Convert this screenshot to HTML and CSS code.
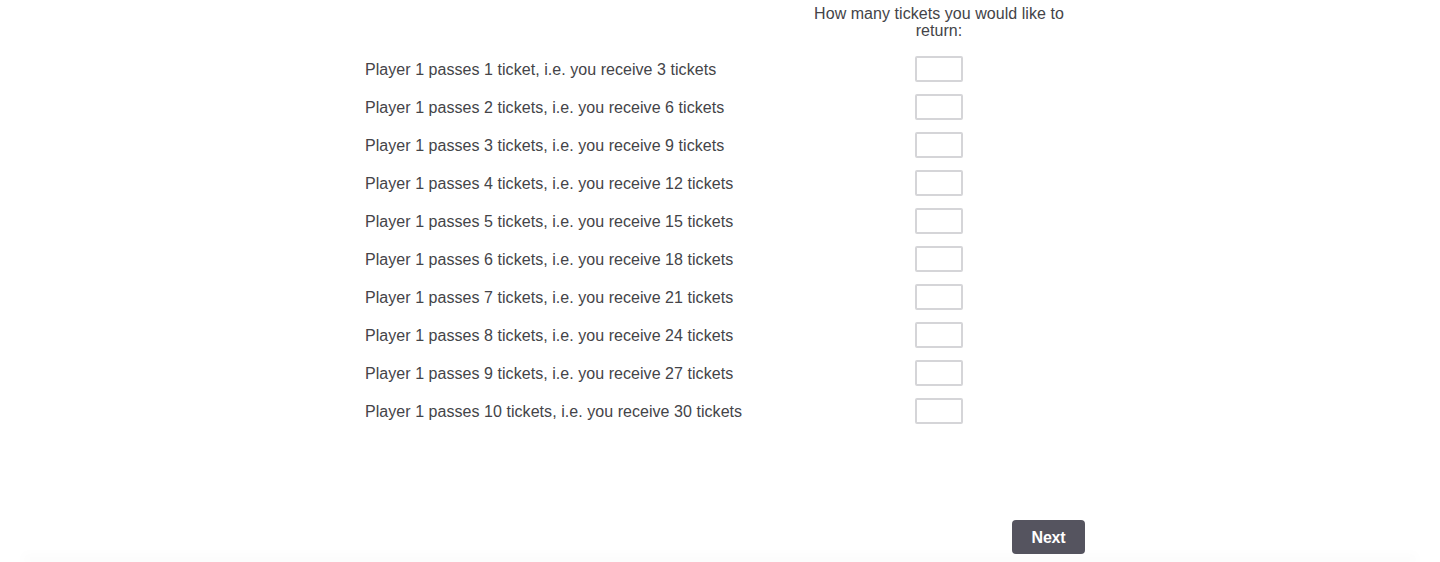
FILE: index.html
```html
<!DOCTYPE html>
<html>
<head>
<meta charset="utf-8">
<link rel="stylesheet" href="styles.css">
</head>
<body>
<div class="page">
  <div class="survey">
    <div class="head-row">
      <div class="label-col"></div>
      <div class="input-col head">How many tickets you would like to return:</div>
    </div>
    <div class="row"><div class="label-col">Player 1 passes 1 ticket, i.e. you receive 3 tickets</div><div class="input-col"><input class="field" type="text"></div></div>
    <div class="row"><div class="label-col">Player 1 passes 2 tickets, i.e. you receive 6 tickets</div><div class="input-col"><input class="field" type="text"></div></div>
    <div class="row"><div class="label-col">Player 1 passes 3 tickets, i.e. you receive 9 tickets</div><div class="input-col"><input class="field" type="text"></div></div>
    <div class="row"><div class="label-col">Player 1 passes 4 tickets, i.e. you receive 12 tickets</div><div class="input-col"><input class="field" type="text"></div></div>
    <div class="row"><div class="label-col">Player 1 passes 5 tickets, i.e. you receive 15 tickets</div><div class="input-col"><input class="field" type="text"></div></div>
    <div class="row"><div class="label-col">Player 1 passes 6 tickets, i.e. you receive 18 tickets</div><div class="input-col"><input class="field" type="text"></div></div>
    <div class="row"><div class="label-col">Player 1 passes 7 tickets, i.e. you receive 21 tickets</div><div class="input-col"><input class="field" type="text"></div></div>
    <div class="row"><div class="label-col">Player 1 passes 8 tickets, i.e. you receive 24 tickets</div><div class="input-col"><input class="field" type="text"></div></div>
    <div class="row"><div class="label-col">Player 1 passes 9 tickets, i.e. you receive 27 tickets</div><div class="input-col"><input class="field" type="text"></div></div>
    <div class="row"><div class="label-col">Player 1 passes 10 tickets, i.e. you receive 30 tickets</div><div class="input-col"><input class="field" type="text"></div></div>
  </div>
  <div class="actions">
    <button class="next" type="button">Next</button>
  </div>
  <div class="spacer"></div>
  <div class="footer-edge"></div>
</div>
</body>
</html>
```

FILE: styles.css
```css
html, body {
  margin: 0;
  padding: 0;
  background: #ffffff;
  overflow: hidden;
}
body {
  font-family: "Liberation Sans", Arial, Helvetica, sans-serif;
  font-size: 16px;
  color: #444448;
}
.page {
  width: 1440px;
  height: 562px;
  display: flex;
  flex-direction: column;
  overflow: hidden;
}
.survey {
  margin-left: 365px;
  width: 720px;
  padding-top: 5px;
}
.head-row {
  display: flex;
  margin-bottom: 11px;
}
.row {
  display: flex;
  align-items: center;
  height: 38px;
}
.label-col {
  width: 428px;
  line-height: 20px;
  letter-spacing: 0.05px;
  padding-top: 2px;
  box-sizing: border-box;
}
.input-col {
  width: 292px;
  display: flex;
  justify-content: center;
}
.head {
  text-align: center;
  line-height: 17px;
  padding: 0 10px;
  box-sizing: border-box;
  display: block;
  letter-spacing: 0.05px;
}
.field {
  box-sizing: border-box;
  width: 48px;
  height: 26px;
  border: 2px solid #d5d5d8;
  border-radius: 2px;
  background: #fff;
  margin: 0;
  padding: 0 4px;
  outline: none;
}
.actions {
  margin-left: 365px;
  width: 720px;
  display: flex;
  justify-content: flex-end;
  margin-top: 90px;
}
.next {
  width: 73px;
  height: 34px;
  background: #55545f;
  color: #ffffff;
  border: none;
  border-radius: 4px;
  font-family: "Liberation Sans", Arial, Helvetica, sans-serif;
  font-size: 16px;
  font-weight: bold;
  letter-spacing: -0.2px;
  padding: 2px 0 0 0;
}
.spacer {
  flex: 1;
}
.footer-edge {
  margin: 0 24px;
  height: 12px;
  background: linear-gradient(to bottom, rgba(0, 0, 0, 0), rgba(0, 0, 0, 0.035));
  filter: blur(5px);
}
```
